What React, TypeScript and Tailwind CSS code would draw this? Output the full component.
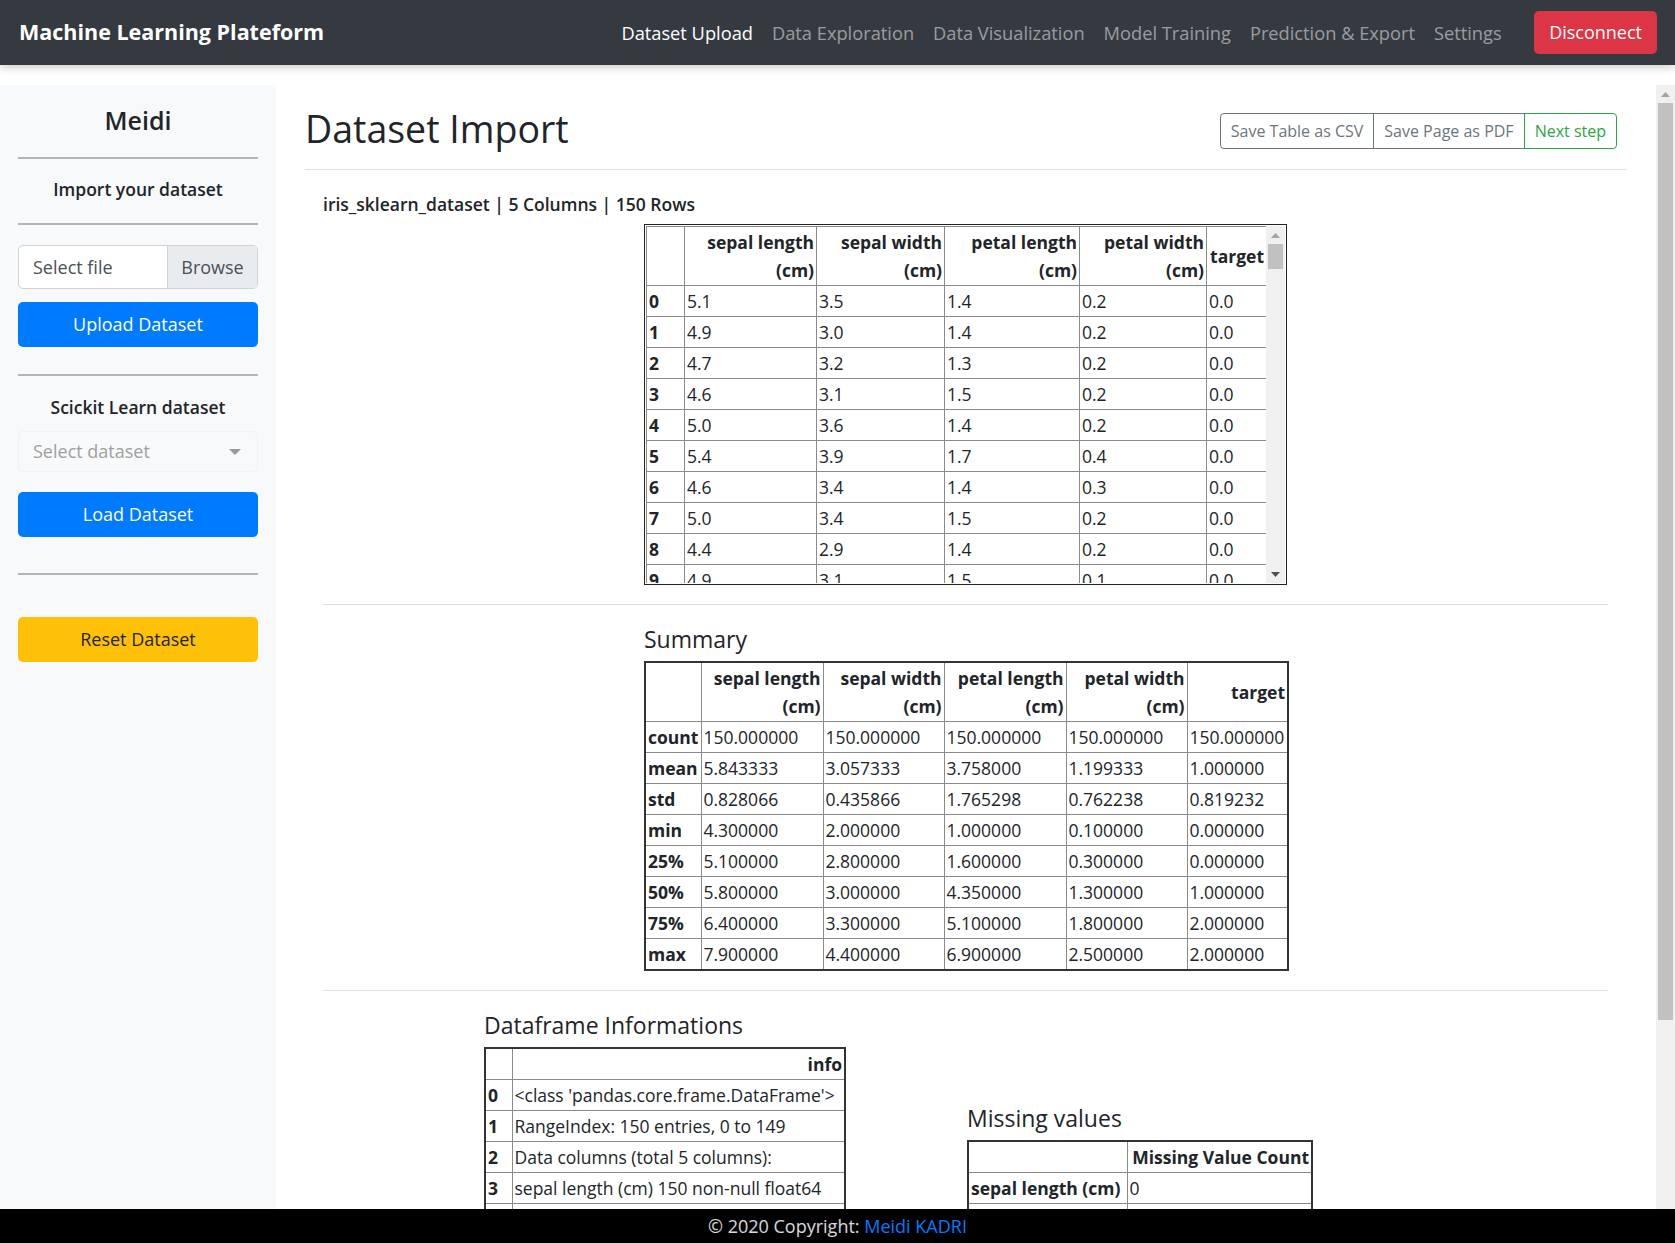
import { ReactNode } from "react";

const navLinks = ["Dataset Upload", "Data Exploration", "Data Visualization", "Model Training", "Prediction & Export", "Settings"];

const cols = ["sepal length (cm)", "sepal width (cm)", "petal length (cm)", "petal width (cm)"];

const irisRows = [
  ["5.1", "3.5", "1.4", "0.2", "0.0"],
  ["4.9", "3.0", "1.4", "0.2", "0.0"],
  ["4.7", "3.2", "1.3", "0.2", "0.0"],
  ["4.6", "3.1", "1.5", "0.2", "0.0"],
  ["5.0", "3.6", "1.4", "0.2", "0.0"],
  ["5.4", "3.9", "1.7", "0.4", "0.0"],
  ["4.6", "3.4", "1.4", "0.3", "0.0"],
  ["5.0", "3.4", "1.5", "0.2", "0.0"],
  ["4.4", "2.9", "1.4", "0.2", "0.0"],
  ["4.9", "3.1", "1.5", "0.1", "0.0"],
  ["5.4", "3.7", "1.5", "0.2", "0.0"],
];

const summaryRows: [string, string[]][] = [
  ["count", ["150.000000", "150.000000", "150.000000", "150.000000", "150.000000"]],
  ["mean", ["5.843333", "3.057333", "3.758000", "1.199333", "1.000000"]],
  ["std", ["0.828066", "0.435866", "1.765298", "0.762238", "0.819232"]],
  ["min", ["4.300000", "2.000000", "1.000000", "0.100000", "0.000000"]],
  ["25%", ["5.100000", "2.800000", "1.600000", "0.300000", "0.000000"]],
  ["50%", ["5.800000", "3.000000", "4.350000", "1.300000", "1.000000"]],
  ["75%", ["6.400000", "3.300000", "5.100000", "1.800000", "2.000000"]],
  ["max", ["7.900000", "4.400000", "6.900000", "2.500000", "2.000000"]],
];

const infoRows = [
  "<class 'pandas.core.frame.DataFrame'>",
  "RangeIndex: 150 entries, 0 to 149",
  "Data columns (total 5 columns):",
  "sepal length (cm) 150 non-null float64",
  "sepal width (cm) 150 non-null float64",
  "petal length (cm) 150 non-null float64",
  "petal width (cm) 150 non-null float64",
  "target 150 non-null float64",
  "dtypes: float64(5)",
  "memory usage: 6.0 KB",
];

const missingRows = ["sepal length (cm)", "sepal width (cm)", "petal length (cm)", "petal width (cm)", "target"];

function Th({ children, w }: { children?: ReactNode; w?: string }) {
  return <th className={`border border-[#8a8a8a] px-[2px] py-[1px] text-right align-middle font-bold leading-[28px] ${w ?? ""}`}>{children}</th>;
}

function Td({ children, bold }: { children?: ReactNode; bold?: boolean }) {
  return <td className={`border border-[#8a8a8a] px-[2px] py-[1px] text-left leading-[28px] whitespace-nowrap ${bold ? "font-bold" : ""}`}>{children}</td>;
}

function Rule() {
  return <div className="h-[2px] bg-[#b4b4b4]" />;
}

function ScrollArrow({ up }: { up?: boolean }) {
  return (
    <div className="h-[18px] flex items-center justify-center">
      <svg width="9" height="5" viewBox="0 0 9 5">
        <path d={up ? "M0 5 L4.5 0 L9 5 Z" : "M0 0 L4.5 5 L9 0 Z"} fill={up ? "#a3a3a3" : "#505050"} />
      </svg>
    </div>
  );
}

function Sidebar() {
  return (
    <aside className="w-[276px] shrink-0 bg-[#f8f9fa] px-[18px] pt-[17px] font-['Open_Sans',sans-serif]">
      <div className="text-center text-[25px] font-semibold leading-[36px]">Meidi</div>
      <div className="mt-[19px]">
        <Rule />
      </div>
      <div className="mt-[17px] text-center text-[17.5px] font-semibold leading-[26px]">Import your dataset</div>
      <div className="mt-[21px]">
        <Rule />
      </div>
      <div className="mt-[20px] flex h-[44px] rounded-[5px] border border-[#ced4da] bg-white text-[18px] text-[#495057] overflow-hidden">
        <div className="flex flex-1 items-center pl-[14px]">Select file</div>
        <div className="flex w-[90px] items-center justify-center border-l border-[#ced4da] bg-[#e9ecef]">Browse</div>
      </div>
      <button className="mt-[13px] h-[45px] w-full rounded-[5px] bg-[#007bff] text-[18px] text-white">Upload Dataset</button>
      <div className="mt-[27px]">
        <Rule />
      </div>
      <div className="mt-[18px] text-center text-[17.5px] font-semibold leading-[26px]">Scickit Learn dataset</div>
      <div className="mt-[11px] flex h-[41px] items-center justify-between rounded-[5px] border border-[#f1f2f4] bg-[#f8f9fa] pl-[14px] pr-[16px] text-[18px] text-[#a0a0a0]">
        <span>Select dataset</span>
        <svg width="12" height="6" viewBox="0 0 12 6">
          <path d="M0 0 L6 6 L12 0 Z" fill="#9a9a9a" />
        </svg>
      </div>
      <button className="mt-[20px] h-[45px] w-full rounded-[5px] bg-[#007bff] text-[18px] text-white">Load Dataset</button>
      <div className="mt-[36px]">
        <Rule />
      </div>
      <button className="mt-[42px] h-[45px] w-full rounded-[5px] bg-[#ffc107] text-[18px] text-[#212529]">Reset Dataset</button>
    </aside>
  );
}

function DataTable() {
  return (
    <div className="mx-auto mt-[7px] flex h-[361px] w-[643px] border border-[#222] p-px">
      <div className="flex-1 overflow-hidden">
        <table className="w-[620px] table-fixed border-collapse border border-[#333] text-[17.5px]">
          <thead>
            <tr>
              <Th w="w-[38px]" />
              <Th w="w-[132px]">{cols[0]}</Th>
              <Th w="w-[128px]">{cols[1]}</Th>
              <Th w="w-[135px]">{cols[2]}</Th>
              <Th w="w-[127px]">{cols[3]}</Th>
              <Th w="w-[60px]">target</Th>
            </tr>
          </thead>
          <tbody>
            {irisRows.map((r, i) => (
              <tr key={i}>
                <Td bold>{i}</Td>
                {r.map((v, j) => (
                  <Td key={j}>{v}</Td>
                ))}
              </tr>
            ))}
          </tbody>
        </table>
      </div>
      <div className="flex w-[19px] flex-col bg-[#f0f0f0]">
        <ScrollArrow up />
        <div className="mx-[2px] h-[25px] bg-[#c1c1c1]" />
        <div className="flex-1" />
        <ScrollArrow />
      </div>
    </div>
  );
}

function SummaryTable() {
  return (
    <table className="mt-[6px] w-[643px] table-fixed border-collapse border-2 border-[#333] text-[17.5px]">
      <thead>
        <tr>
          <Th w="w-[56px]" />
          <Th w="w-[122px]">{cols[0]}</Th>
          <Th w="w-[121px]">{cols[1]}</Th>
          <Th w="w-[122px]">{cols[2]}</Th>
          <Th w="w-[121px]">{cols[3]}</Th>
          <Th w="w-[101px]">target</Th>
        </tr>
      </thead>
      <tbody>
        {summaryRows.map(([label, vals]) => (
          <tr key={label}>
            <Td bold>{label}</Td>
            {vals.map((v, j) => (
              <Td key={j}>{v}</Td>
            ))}
          </tr>
        ))}
      </tbody>
    </table>
  );
}

function MainContent() {
  return (
    <main className="min-w-0 flex-1 overflow-hidden pl-[29px] pr-[30px] pt-[19px] font-['Open_Sans',sans-serif]">
      <div className="flex items-center justify-between border-b border-[#e0e0e0] pb-[16px]">
        <h1 className="text-[37.5px] font-medium leading-[49px]">Dataset Import</h1>
        <div className="mr-[9px] mt-[5px] flex h-[36px] text-[16px]">
          <button className="rounded-l-[4px] border border-[#6c757d] px-[10px] text-[#6c757d]">Save Table as CSV</button>
          <button className="-ml-px border border-[#6c757d] px-[10px] text-[#6c757d]">Save Page as PDF</button>
          <button className="-ml-px rounded-r-[4px] border border-[#28a745] px-[10px] text-[#28a745]">Next step</button>
        </div>
      </div>
      <div className="px-[18px]">
        <div className="mt-[21px] text-[17.5px] font-semibold leading-[26px]">iris_sklearn_dataset | 5 Columns | 150 Rows</div>
        <DataTable />
        <div className="mt-[19px] border-t border-[#e0e0e0]" />
        <div className="mx-auto w-[643px]">
          <h5 className="mt-[18px] text-[23px] font-medium leading-[32px]">Summary</h5>
          <SummaryTable />
        </div>
        <div className="mt-[19px] border-t border-[#e0e0e0]" />
        <div className="flex items-start gap-[121px] pl-[161px]">
          <div>
            <h5 className="mt-[18px] text-[23px] font-medium leading-[32px]">Dataframe Informations</h5>
            <table className="mt-[6px] w-[362px] table-fixed border-collapse border-2 border-[#333] text-[17.5px]">
              <thead>
                <tr>
                  <Th w="w-[27px]" />
                  <Th>info</Th>
                </tr>
              </thead>
              <tbody>
                {infoRows.map((r, i) => (
                  <tr key={i}>
                    <Td bold>{i}</Td>
                    <Td>{r}</Td>
                  </tr>
                ))}
              </tbody>
            </table>
          </div>
          <div className="mt-[111px]">
            <h5 className="text-[23px] font-medium leading-[32px]">Missing values</h5>
            <table className="mt-[6px] w-[346px] table-fixed border-collapse border-2 border-[#333] text-[17.5px]">
              <thead>
                <tr>
                  <Th w="w-[159px]" />
                  <Th>Missing Value Count</Th>
                </tr>
              </thead>
              <tbody>
                {missingRows.map((r) => (
                  <tr key={r}>
                    <Td bold>{r}</Td>
                    <Td>0</Td>
                  </tr>
                ))}
              </tbody>
            </table>
          </div>
        </div>
      </div>
    </main>
  );
}

export default function App() {
  return (
    <div className="relative flex h-[1243px] w-full flex-col overflow-hidden bg-white font-['Open_Sans',sans-serif] text-[#212529]">
      <nav className="relative z-10 flex h-[65px] shrink-0 items-center bg-[#343a40] pl-[19px] pr-[18px] shadow-[0_3px_8px_rgba(0,0,0,0.18)]">
        <div className="text-[21.5px] font-bold text-white">Machine Learning Plateform</div>
        <div className="flex-1" />
        <ul className="flex items-center text-[18.25px]">
          {navLinks.map((l, i) => (
            <li key={l} className={`px-[9.5px] ${i === 0 ? "text-white" : "text-white/50"}`}>
              {l}
            </li>
          ))}
        </ul>
        <button className="ml-[23px] h-[43px] rounded-[5px] bg-[#dc3545] px-[15px] text-[18px] text-white">Disconnect</button>
      </nav>
      <div className="mt-[20px] flex min-h-0 flex-1">
        <Sidebar />
        <MainContent />
        <div className="flex w-[19px] shrink-0 flex-col bg-[#f0f0f0]">
          <ScrollArrow up />
          <div className="mx-[2px] h-[917px] bg-[#c1c1c1]" />
        </div>
      </div>
      <footer className="flex h-[34px] shrink-0 items-center justify-center bg-black text-[18px] text-white/85">
        <span>© 2020 Copyright:&nbsp;</span>
        <span className="text-[#007bff]">Meidi KADRI</span>
      </footer>
    </div>
  );
}
